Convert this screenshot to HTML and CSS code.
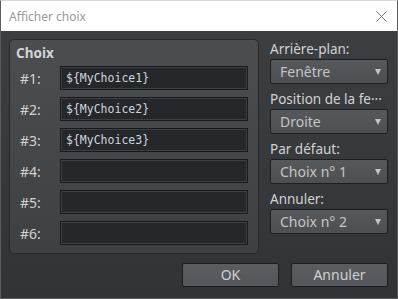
FILE: index.html
```html
<!DOCTYPE html>
<html lang="fr">
<head>
    <meta charset="UTF-8">
    <title>Afficher choix</title>
    <link rel="stylesheet" href="styles.css">
</head>
<body>
    <div class="dialog">
        <div class="titlebar">
            <span class="title">Afficher choix</span>
            <svg class="close" width="11" height="11" viewBox="0 0 11 11">
                <path d="M0.5 0.5 L10.5 10.5 M10.5 0.5 L0.5 10.5" stroke="#777" stroke-width="1" fill="none"/>
            </svg>
        </div>
        <div class="content">
            <div class="main">
                <div class="group">
                    <div class="group-title">Choix</div>
                    <div class="rows">
                        <label>#1:</label><div class="input">${MyChoice1}</div>
                        <label>#2:</label><div class="input">${MyChoice2}</div>
                        <label>#3:</label><div class="input">${MyChoice3}</div>
                        <label>#4:</label><div class="input"></div>
                        <label>#5:</label><div class="input"></div>
                        <label>#6:</label><div class="input"></div>
                    </div>
                </div>
                <div class="side">
                    <div class="field-label">Arrière-plan:</div>
                    <div class="select"><span>Fenêtre</span><i class="arrow"></i></div>
                    <div class="field-label">Position de la fe···</div>
                    <div class="select"><span>Droite</span><i class="arrow"></i></div>
                    <div class="field-label">Par défaut:</div>
                    <div class="select"><span>Choix n° 1</span><i class="arrow"></i></div>
                    <div class="field-label">Annuler:</div>
                    <div class="select"><span>Choix n° 2</span><i class="arrow"></i></div>
                </div>
            </div>
            <div class="buttons">
                <div class="button">OK</div>
                <div class="button">Annuler</div>
            </div>
        </div>
    </div>
</body>
</html>
```

FILE: styles.css
```css
html, body {
    margin: 0;
    padding: 0;
}
body {
    width: 398px;
    height: 299px;
    overflow: hidden;
    font-family: "Noto Sans", "Open Sans", sans-serif;
    font-size: 13px;
}
.dialog {
    width: 398px;
    height: 299px;
    box-sizing: border-box;
    border: 1px solid #5a5d60;
    border-top-color: #d8d8d8;
    display: flex;
    flex-direction: column;
}
.titlebar {
    height: 30px;
    background: #fff;
    display: flex;
    align-items: center;
    justify-content: space-between;
    padding: 0 10px 0 8px;
    flex-shrink: 0;
}
.title {
    color: #999;
    font-size: 12px;
}
.close {
    margin-top: 1px;
}
.content {
    flex: 1;
    background: linear-gradient(#3c3f42, #313437);
    padding: 8px 9px 0 8px;
}
.main {
    display: flex;
    gap: 11px;
}
.group {
    width: 250px;
    height: 215px;
    box-sizing: border-box;
    border: 1px solid #262829;
    border-radius: 5px;
    background: linear-gradient(#4b4e51, #3e4144);
    padding: 3px 10px 8px 10px;
}
.group-title {
    color: #d4d4d4;
    font-weight: bold;
    font-size: 13.5px;
    line-height: 20px;
    margin-left: -4px;
    height: 23px;
}
.rows {
    display: grid;
    grid-template-columns: 40px 188px;
    row-gap: 7px;
    align-items: center;
}
.rows label {
    color: #d2d2d2;
    font-size: 14px;
}
.input {
    height: 24px;
    box-sizing: border-box;
    background: #25282b;
    border: 1px solid #17191b;
    box-shadow: inset 0 0 0 1px #3d4043;
    color: #cdd6de;
    font-family: "DejaVu Sans Mono", monospace;
    font-size: 11.5px;
    line-height: 22px;
    padding-left: 5px;
}
.side {
    width: 118px;
    display: flex;
    flex-direction: column;
}
.field-label {
    color: #d2d2d2;
    font-size: 13.5px;
    line-height: 20px;
    height: 20px;
    white-space: nowrap;
}
.select {
    height: 25px;
    box-sizing: border-box;
    margin-bottom: 5px;
    background: linear-gradient(#56595c, #4d5053);
    border: 1px solid #1d1f21;
    border-radius: 2px;
    color: #c4c4c4;
    font-size: 14px;
    display: flex;
    align-items: center;
    justify-content: space-between;
    padding: 0 6px 0 9px;
}
.arrow {
    width: 0;
    height: 0;
    border-left: 3.5px solid transparent;
    border-right: 3.5px solid transparent;
    border-top: 6px solid #c4c4c4;
}
.buttons {
    display: flex;
    justify-content: flex-end;
    gap: 12px;
    margin-top: 9px;
}
.button {
    width: 97px;
    height: 24px;
    box-sizing: border-box;
    background: linear-gradient(#5b5e61, #53565a);
    border: 1px solid #1b1d1f;
    border-radius: 2px;
    color: #d0d0d0;
    font-size: 14px;
    text-align: center;
    line-height: 22px;
}
```
